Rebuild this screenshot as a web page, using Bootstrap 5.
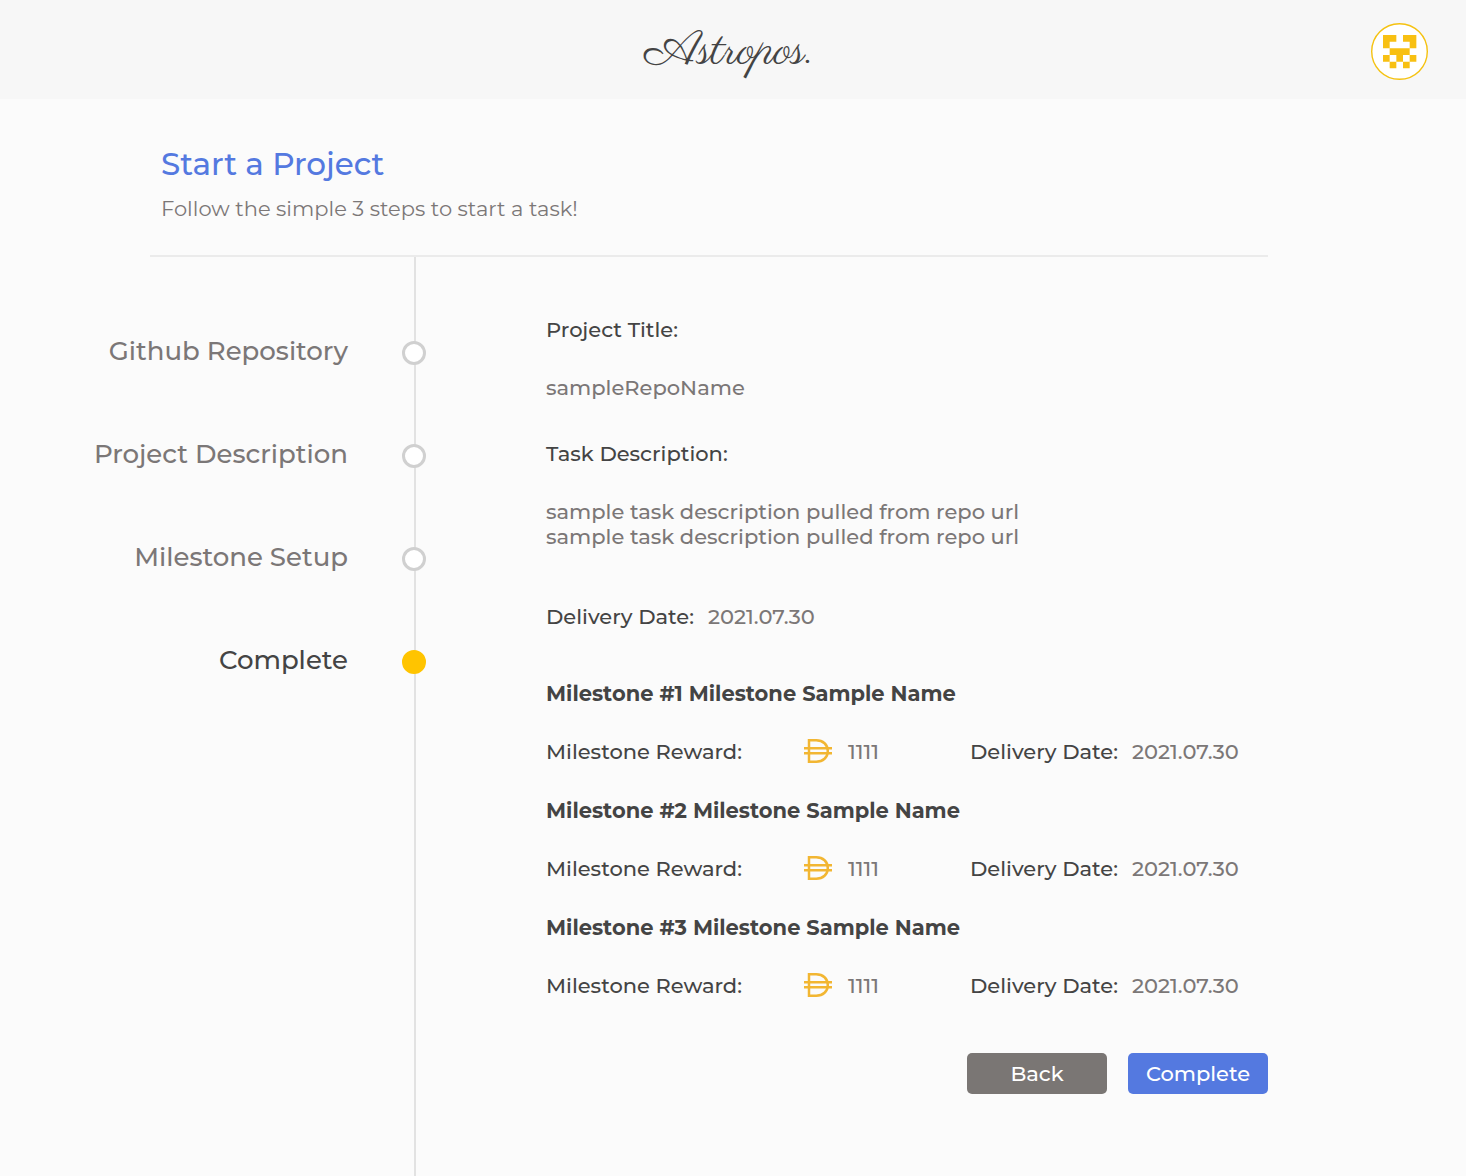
<!DOCTYPE html>
<html lang="en">
<head>
<meta charset="utf-8">
<meta name="viewport" content="width=device-width, initial-scale=1">
<title>Astropos – Start a Project</title>
<link href="https://cdn.jsdelivr.net/npm/bootstrap@5.3.0/dist/css/bootstrap.min.css" rel="stylesheet">
<style>
body { background: #fbfbfb; color: #444; font-family: Montserrat, Inter, sans-serif; font-size: 21px; line-height: 25px; font-weight: 500; }
.topbar { background: #f7f7f7; min-height: 99px; padding: 4px 38px 0; display: grid; grid-template-columns: 1fr auto 1fr; align-items: center; }
.brand { grid-column: 2; font-family: Parisienne, "Liberation Serif", serif; font-size: 48px; line-height: 56px; font-weight: 400; color: #444; padding-right: 8px; }
.avatar { width: 57px; height: 57px; }
.intro { margin: 0 198px 0 150px; padding: 47px 11px 33px; border-bottom: 2px solid #ebebeb; }
.intro h1 { font-size: 31px; line-height: 36px; color: #5479e0; font-weight: 500; margin-bottom: 14px; }
.intro p { line-height: 26px; color: #7b7777; font-weight: 400; }
.steps { width: 426px; padding-top: 44px; position: relative; }
.steps::before { content: ""; position: absolute; top: 0; bottom: 0; right: 10px; width: 2px; background: #e2e2e2; }
.steps li { min-height: 103px; gap: 54px; }
.steps a { color: #7b7777; font-size: 26px; line-height: 32px; padding-bottom: 4px; }
.steps .current a { color: #444; }
.dot { width: 24px; height: 24px; border: 3px solid #d0d0d0; border-radius: 50%; background: #fff; position: relative; }
.current .dot { background: #ffc400; border-color: #ffc400; }
.details { margin: 0 198px 0 120px; padding: 60px 0 82px; }
.details dt { font-weight: 500; }
.details dd { color: #7b7777; margin: 0; }
.field dt { margin-bottom: 33px; }
.field { margin-bottom: 41px; }
.field-long { margin-bottom: 55px; }
.due dt { width: 162px; }
.milestones { margin-top: 52px; display: grid; row-gap: 34px; }
.milestones h2 { font-size: 21px; line-height: 25px; font-weight: 700; margin-bottom: 33px; }
.reward dt { width: 258px; }
.reward dd { width: 166px; gap: 16px; }
.actions { margin-top: 55px; gap: 21px; }
.actions .btn { width: 140px; height: 41px; padding: 0; border: 0; border-radius: 5px; font-size: 21px; font-weight: 500; color: #fff; }
.btn-back { background: #7a7674; }
.btn-complete { background: #5479e0; }
</style>
<script src="https://cdn.jsdelivr.net/npm/bootstrap@5.3.0/dist/js/bootstrap.bundle.min.js"></script>
</head>
<body class="d-flex flex-column min-vh-100">
<svg class="d-none" aria-hidden="true">
  <symbol id="dai" viewBox="0 0 28 24">
    <path d="M5 1.3h7.2C19 1.300 23.800 5.500 23.800 12S19 22.700 12.200 22.700H5z M0 9.300h28 M0 14.300h28" fill="none" stroke="#f2b632" stroke-width="2.500"/>
  </symbol>
</svg>
<header class="topbar">
  <a class="brand text-decoration-none" href="#">Astropos.</a>
  <a class="ms-auto lh-1" href="#" aria-label="Account">
    <svg class="avatar d-block" viewBox="0 0 57 57">
      <circle cx="28.500" cy="28.500" r="27.800" fill="#fff" stroke="#f5c211" stroke-width="1.400"/>
      <path transform="translate(12 12) scale(6.670)" fill="#f8c012" d="M0 0h2v1H1v1H0z M3 0h2v2H4V1H3z M1 2h3v1H3v1H2V3H1z M0 3h1v1H0z M4 3h1v1H4z M1 4h1v1H1z M3 4h1v1H3z"/>
    </svg>
  </a>
</header>
<main class="flex-grow-1 d-flex flex-column">
  <section class="intro">
    <h1>Start a Project</h1>
    <p class="mb-0">Follow the simple 3 steps to start a task!</p>
  </section>
  <div class="d-flex flex-grow-1">
    <nav class="steps flex-shrink-0" aria-label="Steps">
      <ol class="list-unstyled mb-0">
        <li class="d-flex justify-content-end align-items-center"><a class="text-decoration-none" href="#">Github Repository</a><span class="dot"></span></li>
        <li class="d-flex justify-content-end align-items-center"><a class="text-decoration-none" href="#">Project Description</a><span class="dot"></span></li>
        <li class="d-flex justify-content-end align-items-center"><a class="text-decoration-none" href="#">Milestone Setup</a><span class="dot"></span></li>
        <li class="d-flex justify-content-end align-items-center current"><a class="text-decoration-none" href="#" aria-current="step">Complete</a><span class="dot"></span></li>
      </ol>
    </nav>
    <section class="details flex-grow-1">
      <dl class="field"><dt>Project Title:</dt><dd>sampleRepoName</dd></dl>
      <dl class="field field-long"><dt>Task Description:</dt><dd>sample task description pulled from repo url<br>sample task description pulled from repo url</dd></dl>
      <dl class="due d-flex mb-0"><dt>Delivery Date:</dt><dd>2021.07.30</dd></dl>
      <div class="milestones">
        <article>
          <h2>Milestone #1 Milestone Sample Name</h2>
          <div class="d-flex">
            <dl class="reward d-flex mb-0"><dt>Milestone Reward:</dt><dd class="d-flex align-items-start"><svg width="28" height="24" aria-label="DAI"><use href="#dai"/></svg>1111</dd></dl>
            <dl class="due d-flex mb-0"><dt>Delivery Date:</dt><dd>2021.07.30</dd></dl>
          </div>
        </article>
        <article>
          <h2>Milestone #2 Milestone Sample Name</h2>
          <div class="d-flex">
            <dl class="reward d-flex mb-0"><dt>Milestone Reward:</dt><dd class="d-flex align-items-start"><svg width="28" height="24" aria-label="DAI"><use href="#dai"/></svg>1111</dd></dl>
            <dl class="due d-flex mb-0"><dt>Delivery Date:</dt><dd>2021.07.30</dd></dl>
          </div>
        </article>
        <article>
          <h2>Milestone #3 Milestone Sample Name</h2>
          <div class="d-flex">
            <dl class="reward d-flex mb-0"><dt>Milestone Reward:</dt><dd class="d-flex align-items-start"><svg width="28" height="24" aria-label="DAI"><use href="#dai"/></svg>1111</dd></dl>
            <dl class="due d-flex mb-0"><dt>Delivery Date:</dt><dd>2021.07.30</dd></dl>
          </div>
        </article>
      </div>
      <div class="actions d-flex justify-content-end">
        <button type="button" class="btn btn-back">Back</button>
        <button type="button" class="btn btn-complete">Complete</button>
      </div>
    </section>
  </div>
</main>
</body>
</html>
